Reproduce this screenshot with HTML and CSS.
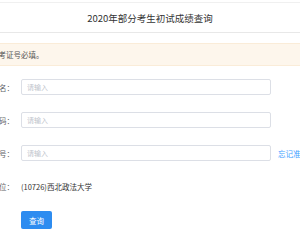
FILE: index.html
```html
<!DOCTYPE html>
<html lang="zh-CN">
<head>
  <meta charset="UTF-8" />
  <title>2020年部分考生初试成绩查询</title>
  <link rel="stylesheet" href="styles.css">
</head>
<body>
  <div class="header">
    <h1>2020年部分考生初试成绩查询</h1>
  </div>

  <div class="alert">准考证号必填。</div>

  <form class="query-form">
    <div class="row">
      <label>考生姓名：</label>
      <input type="text" placeholder="请输入" />
    </div>
    <div class="row">
      <label>证件号码：</label>
      <input type="text" placeholder="请输入" />
    </div>
    <div class="row">
      <label>准考证号：</label>
      <input type="text" placeholder="请输入" />
      <a class="forgot" href="#">忘记准考证号？</a>
    </div>
    <div class="row">
      <label>报考单位：</label>
      <span class="value">(10726)西北政法大学</span>
    </div>
    <div class="row actions">
      <label></label>
      <button type="button">查询</button>
    </div>
  </form>
</body>
</html>
```

FILE: styles.css
```css
* {
  box-sizing: border-box;
}

body {
  margin: 0;
  background: #fff;
  color: #333;
  font-family: "Noto Sans CJK SC", "Liberation Sans", sans-serif;
  overflow: hidden;
}

.header {
  margin-top: 2px;
  height: 31px;
  border-top: 1px solid #f0f0f0;
  border-bottom: 1px solid #e8e8e8;
  display: flex;
  align-items: center;
  justify-content: center;
}

.header h1 {
  margin: 0;
  font-size: 9.5px;
  font-weight: normal;
  color: #333;
}

.alert {
  margin-top: 10px;
  height: 23px;
  line-height: 21px;
  margin-left: -9px;
  background: #fdf6ec;
  border-top: 1px solid #faecd8;
  border-bottom: 1px solid #faecd8;
  font-size: 7.5px;
  color: #555;
  white-space: nowrap;
}

.query-form {
  margin-top: 13px;
  margin-left: -36px;
  width: 380px;
}

.row {
  display: flex;
  align-items: center;
  height: 16px;
  margin-bottom: 17px;
  font-size: 7.5px;
}

.row label {
  width: 50px;
  flex: none;
  text-align: right;
  color: #606266;
}

.row input {
  margin-left: 7px;
  width: 250px;
  height: 16px;
  padding: 0 5px;
  border: 1px solid #dcdfe6;
  border-radius: 2px;
  font-size: 7px;
  font-family: inherit;
  color: #333;
}

.row input::placeholder {
  color: #c0c4cc;
}

.forgot {
  margin-left: 7px;
  color: #409eff;
  text-decoration: none;
  white-space: nowrap;
}

.value {
  margin-left: 7px;
  color: #333;
}

.actions {
  margin-top: 8px;
  height: 18px;
}

.actions button {
  margin-left: 7px;
  width: 31px;
  height: 18px;
  border: none;
  border-radius: 2px;
  background: #2d8cf0;
  color: #fff;
  font-size: 7.5px;
  font-family: inherit;
  padding: 0;
}
```
